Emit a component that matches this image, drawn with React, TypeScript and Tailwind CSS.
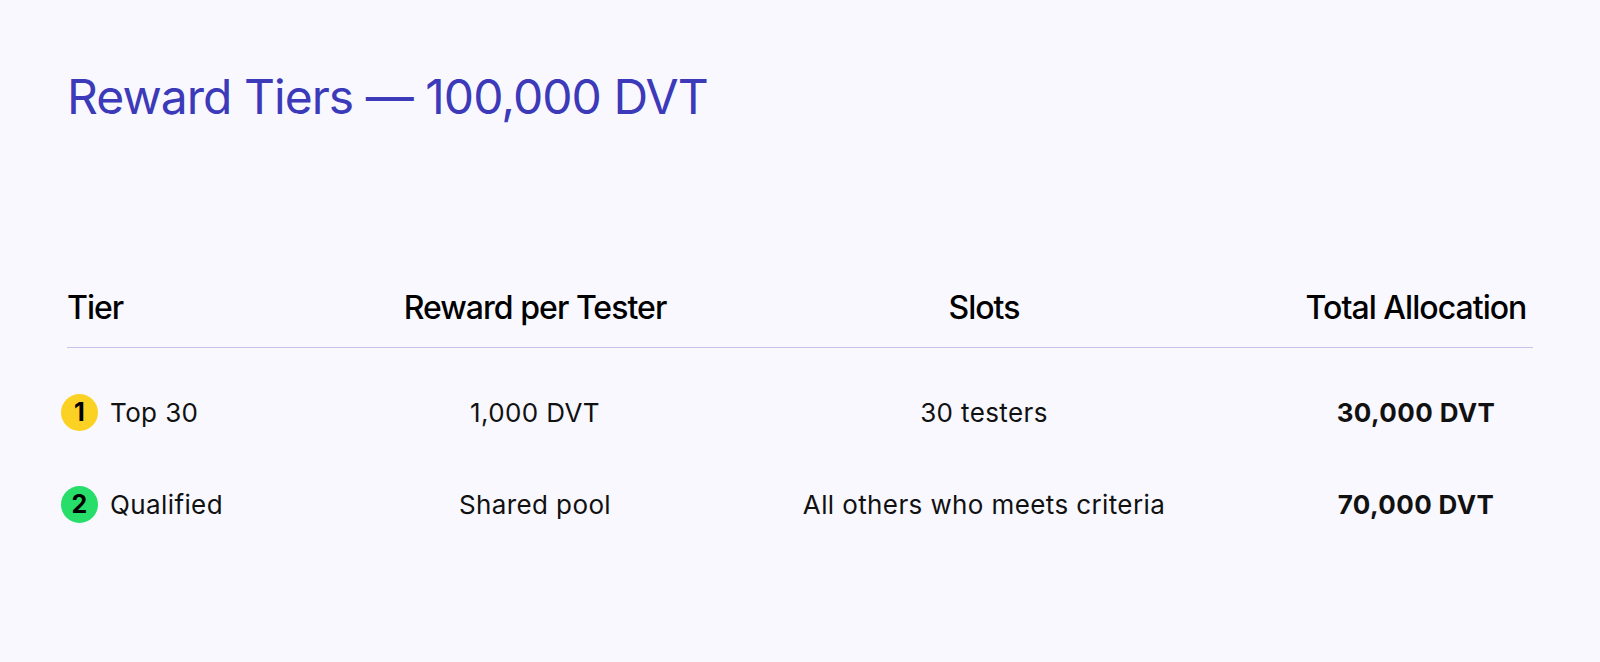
const rows = [
  { n: "1", badge: "bg-[#fbd224]", tier: "Top 30", reward: "1,000 DVT", slots: "30 testers", total: "30,000 DVT" },
  { n: "2", badge: "bg-[#26de69]", tier: "Qualified", reward: "Shared pool", slots: "All others who meets criteria", total: "70,000 DVT" },
];

const cols = "grid grid-cols-[334px_268px_630px_234px]";

export default function App() {
  return (
    <div className="h-[662px] w-full bg-[#f8f8fe] px-[67px] pt-[68px] font-['Inter',sans-serif] text-[#111111]">
      <h1 className="text-[48px] leading-[1.2] font-normal tracking-[-0.02em] text-[#3c3ab9]">
        Reward Tiers — 100,000 DVT
      </h1>

      <div className="mt-[164px] w-[1466px]">
        <div className={`${cols} items-center border-b border-[#c6c4ec] pb-[21px] text-[32px] leading-[36px] font-medium tracking-[-0.03em] text-black`}>
          <div>Tier</div>
          <div className="text-center">Reward per Tester</div>
          <div className="text-center">Slots</div>
          <div className="text-center">Total Allocation</div>
        </div>

        <div className="pt-[19px]">
          {rows.map((r) => (
            <div key={r.n} className={`${cols} h-[92px] items-center text-[26px] tracking-[0.015em]`}>
              <div className="-ml-[6px] flex items-center gap-3">
                <span className={`flex size-[37px] items-center justify-center rounded-full ${r.badge} text-[25px] font-bold text-black`}>
                  {r.n}
                </span>
                <span>{r.tier}</span>
              </div>
              <div className="text-center">{r.reward}</div>
              <div className="text-center">{r.slots}</div>
              <div className="text-center font-bold">{r.total}</div>
            </div>
          ))}
        </div>
      </div>
    </div>
  );
}
